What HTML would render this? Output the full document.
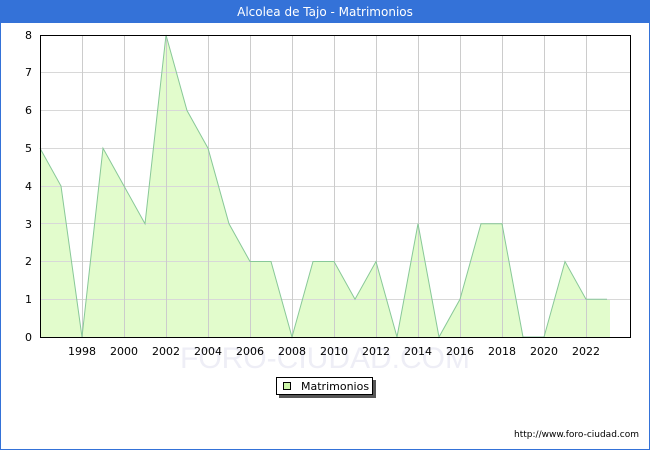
<!DOCTYPE html>
<html><head><style>
body{margin:0;width:650px;height:450px;overflow:hidden;font-family:"DejaVu Sans","Liberation Sans",sans-serif;}
</style></head><body>
<svg width="650" height="450" xmlns="http://www.w3.org/2000/svg" font-family="DejaVu Sans, Liberation Sans, sans-serif">
<rect x="0" y="0" width="650" height="450" fill="#fff"/>
<rect x="0.5" y="0.5" width="649" height="449" fill="none" stroke="#3472d8"/>
<rect x="0" y="0" width="650" height="23" fill="#3472d8"/>
<text x="325" y="16" text-anchor="middle" fill="#fff" font-size="12">Alcolea de Tajo - Matrimonios</text>
<text x="325" y="368" text-anchor="middle" font-size="30" fill="#eeeef6" font-family="Liberation Sans, sans-serif">FORO-CIUDAD.COM</text>
<polygon fill="#e2fccc" stroke="none" points="40,337 40,148.25 61,186 82,337 103,148.25 124,186 145,223.75 166,35 187,110.5 208,148.25 229,223.75 250,261.5 271,261.5 292,337 313,261.5 334,261.5 355,299.25 376,261.5 397,337 418,223.75 439,337 460,299.25 481,223.75 502,223.75 523,337 544,337 565,261.5 586,299.25 607,299.25 610,299.25 610,337"/>
<g stroke="#d8d8d8" stroke-width="1">
<line x1="40" y1="299.5" x2="630" y2="299.5"/><line x1="40" y1="261.5" x2="630" y2="261.5"/>
<line x1="40" y1="223.5" x2="630" y2="223.5"/><line x1="40" y1="186.5" x2="630" y2="186.5"/>
<line x1="40" y1="148.5" x2="630" y2="148.5"/><line x1="40" y1="110.5" x2="630" y2="110.5"/>
<line x1="40" y1="72.5" x2="630" y2="72.5"/>
</g>
<g stroke="#cccccc" stroke-width="1">
<line x1="82.5" y1="35" x2="82.5" y2="337"/><line x1="124.5" y1="35" x2="124.5" y2="337"/>
<line x1="166.5" y1="35" x2="166.5" y2="337"/><line x1="208.5" y1="35" x2="208.5" y2="337"/>
<line x1="250.5" y1="35" x2="250.5" y2="337"/><line x1="292.5" y1="35" x2="292.5" y2="337"/>
<line x1="334.5" y1="35" x2="334.5" y2="337"/><line x1="376.5" y1="35" x2="376.5" y2="337"/>
<line x1="418.5" y1="35" x2="418.5" y2="337"/><line x1="460.5" y1="35" x2="460.5" y2="337"/>
<line x1="502.5" y1="35" x2="502.5" y2="337"/><line x1="544.5" y1="35" x2="544.5" y2="337"/>
<line x1="586.5" y1="35" x2="586.5" y2="337"/>
</g>
<polyline fill="none" stroke="#88c898" stroke-width="1" points="40,148.25 61,186 82,337 103,148.25 124,186 145,223.75 166,35 187,110.5 208,148.25 229,223.75 250,261.5 271,261.5 292,337 313,261.5 334,261.5 355,299.25 376,261.5 397,337 418,223.75 439,337 460,299.25 481,223.75 502,223.75 523,337 544,337 565,261.5 586,299.25 607,299.25"/>
<rect x="40.5" y="35.5" width="590" height="302" fill="none" stroke="#000"/>
<g font-size="11" fill="#000" text-anchor="end">
<text x="32" y="341">0</text><text x="32" y="303">1</text><text x="32" y="265">2</text>
<text x="32" y="228">3</text><text x="32" y="190">4</text><text x="32" y="152">5</text>
<text x="32" y="114">6</text><text x="32" y="76">7</text><text x="32" y="39">8</text>
</g>
<g font-size="11" fill="#000" text-anchor="middle">
<text x="82" y="355">1998</text><text x="124" y="355">2000</text><text x="166" y="355">2002</text>
<text x="208" y="355">2004</text><text x="250" y="355">2006</text><text x="292" y="355">2008</text>
<text x="334" y="355">2010</text><text x="376" y="355">2012</text><text x="418" y="355">2014</text>
<text x="460" y="355">2016</text><text x="502" y="355">2018</text><text x="544" y="355">2020</text>
<text x="586" y="355">2022</text>
</g>
<rect x="279" y="380" width="97" height="18" fill="#555"/>
<rect x="276.5" y="377.5" width="96" height="17" fill="#fff" stroke="#000"/>
<rect x="283.5" y="382.5" width="7" height="7" fill="#ccf5a8" stroke="#000"/>
<text x="301" y="390" font-size="11" fill="#000">Matrimonios</text>
<text x="639" y="437" text-anchor="end" font-size="9" fill="#000">http://www.foro-ciudad.com</text>
</svg>
</body></html>
